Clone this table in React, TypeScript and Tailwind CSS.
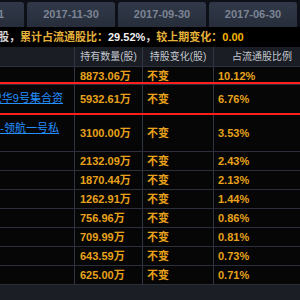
import React from "react";

const rows = [
  { name: "", amount: "8873.06万", change: "不变", ratio: "10.12%", h: "h-[18px]" },
  { name: "深圳前海锐华9号集合资", amount: "5932.61万", change: "不变", ratio: "6.76%", h: "h-[29px]" },
  { name: "华润深国投信托有限公司(华润信托)-领航一号私", amount: "3100.00万", change: "不变", ratio: "3.53%", h: "h-[38px]" },
  { name: "", amount: "2132.09万", change: "不变", ratio: "2.43%", h: "h-[19px]" },
  { name: "", amount: "1870.44万", change: "不变", ratio: "2.13%", h: "h-[19px]" },
  { name: "", amount: "1262.91万", change: "不变", ratio: "1.44%", h: "h-[19px]" },
  { name: "", amount: "756.96万", change: "不变", ratio: "0.86%", h: "h-[19px]" },
  { name: "", amount: "709.99万", change: "不变", ratio: "0.81%", h: "h-[19px]" },
  { name: "", amount: "643.59万", change: "不变", ratio: "0.73%", h: "h-[19px]" },
  { name: "", amount: "625.00万", change: "不变", ratio: "0.71%", h: "h-[19px]" },
];

const tabs = ["2017-12-31", "2017-11-30", "2017-09-30", "2017-06-30"];

export default function App() {
  return (
    <div className="w-[300px] h-[300px] overflow-hidden bg-[#1b1e25] font-['Liberation_Sans','Noto_Sans_CJK_SC',sans-serif]">
      {/* 报告期标签 */}
      <div className="h-[27px] bg-[#0d1016] flex items-end gap-[3px] -ml-[64px] pt-[2px]">
        {tabs.map((t, i) => (
          <div
            key={t}
            className={`w-[88px] shrink-0 h-[25px] rounded-t-[3px] bg-gradient-to-b from-[#313949] to-[#272d3a] flex items-center justify-center text-[11px] font-bold text-[#7c8595] ${
              i === 0 ? "pr-[8px]" : ""
            }`}
          >
            {t}
          </div>
        ))}
      </div>

      {/* 汇总信息 */}
      <div className="h-[20px] bg-black flex items-center whitespace-nowrap text-[11px] font-bold -ml-[2px]">
        <span className="text-[#d6d6d6]">股，</span>
        <span className="text-[#e6b23a]">累计占流通股比：</span>
        <span className="text-[#f2f2f2]">29.52%</span>
        <span className="text-[#d6d6d6]">，</span>
        <span className="text-[#e6b23a]">较上期变化：</span>
        <span className="text-[#f7b500]">0.00</span>
      </div>

      {/* 表头 */}
      <div className="grid grid-cols-[75px_68px_71px_1fr] h-[20px] bg-[#1a1d24] border-b border-[#2c323d] text-[10px] text-[#c3c7cf]">
        <div className="border-r border-[#2f3542]" />
        <div className="border-r border-[#2f3542] flex items-center justify-center">持有数量(股)</div>
        <div className="border-r border-[#2f3542] flex items-center justify-center">持股变化(股)</div>
        <div className="flex items-center justify-center pl-[10px]">占流通股比例</div>
      </div>

      {/* 股东列表 */}
      <div className="bg-[#060607]">
        {rows.map((r, i) => (
          <div
            key={i}
            className={`relative grid grid-cols-[75px_68px_71px_1fr] ${r.h} border-b border-[#2a2f39] text-[11px] font-bold text-[#e8a21a]`}
          >
            {i === 1 && (
              <>
                <div className="absolute left-0 right-0 -top-[3px] h-[2px] bg-[#ff1f1f]" />
                <div className="absolute left-0 right-0 -bottom-[2px] h-[2px] bg-[#ff1f1f] z-10" />
              </>
            )}
            <div className="border-r border-[#2f3542] overflow-hidden relative">
              {r.name && (
                <div
                  className={`absolute ${i === 1 ? "right-[11px] top-[5px]" : "right-[15px] top-[6px]"} whitespace-nowrap text-[11px] font-normal text-[#2490ff] underline`}
                >
                  {r.name}
                </div>
              )}
            </div>
            <div className="border-r border-[#2f3542] flex items-center pl-[5px] pt-[1px]">{r.amount}</div>
            <div className="border-r border-[#2f3542] flex items-center pl-[4px] pt-[1px]">{r.change}</div>
            <div className="flex items-center pl-[4px] pt-[1px]">{r.ratio}</div>
          </div>
        ))}
      </div>
    </div>
  );
}
